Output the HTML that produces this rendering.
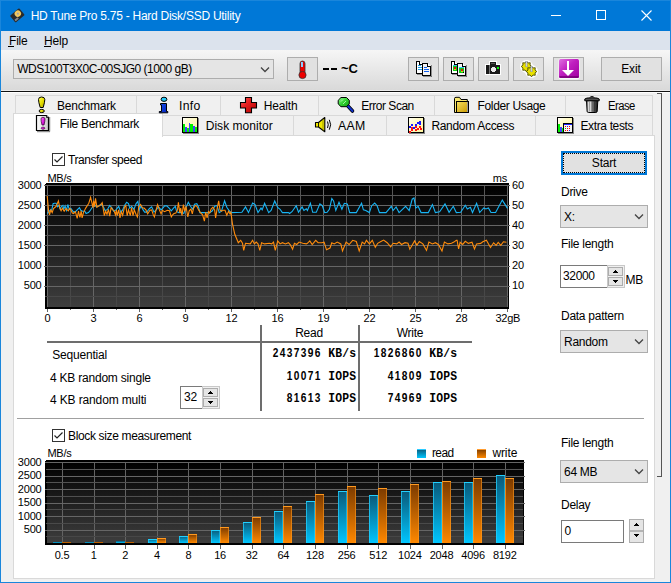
<!DOCTYPE html><html><head><meta charset="utf-8"><style>
html,body{margin:0;padding:0;width:671px;height:583px;overflow:hidden;background:#f0f0f0;}
.t{position:absolute;white-space:nowrap;}
</style></head><body>
<div style="position:absolute;left:0px;top:0px;width:671px;height:31px;background:#0078d7;"></div>
<svg style="position:absolute;left:9px;top:7px" width="16" height="16" viewBox="0 0 16 16">
<g transform="rotate(-40 8 8)"><rect x="2" y="4" width="12" height="9" rx="1" fill="#2a2a2a"/>
<circle cx="9.5" cy="7.5" r="3.2" fill="#f0c860"/><circle cx="9.5" cy="7.5" r="1" fill="#9aa0b0"/><rect x="3" y="10" width="4" height="2" fill="#888"/></g></svg>
<div class="t" style="left:30.7px;top:9.84px;font-size:12px;line-height:12px;letter-spacing:-0.259px;font-family:'Liberation Sans', sans-serif;font-weight:normal;color:#fff;">HD Tune Pro 5.75 - Hard Disk/SSD Utility</div>
<div style="position:absolute;left:551px;top:15px;width:10px;height:1px;background:#fff;"></div>
<div style="position:absolute;left:596px;top:10px;width:10px;height:10px;border:1px solid #fff;box-sizing:border-box;"></div>
<svg style="position:absolute;left:641px;top:10px" width="11" height="11" viewBox="0 0 11 11"><path d="M0.5 0.5L10.5 10.5M10.5 0.5L0.5 10.5" stroke="#fff" stroke-width="1.1"/></svg>
<div style="position:absolute;left:0px;top:0px;width:1px;height:583px;background:#1a86db;"></div>
<div style="position:absolute;left:670px;top:0px;width:1px;height:583px;background:#1a86db;"></div>
<div style="position:absolute;left:0px;top:582px;width:671px;height:1px;background:#1a86db;"></div>
<div style="position:absolute;left:0px;top:0px;width:671px;height:1px;background:#1a86db;"></div>
<div style="position:absolute;left:1px;top:31px;width:669px;height:19px;background:#dce3ed;"></div>
<div class="t" style="left:9px;top:34.84px;font-size:12px;line-height:12px;letter-spacing:-0.2px;font-family:'Liberation Sans', sans-serif;font-weight:normal;color:#000;">File</div>
<div style="position:absolute;left:8px;top:46px;width:6px;height:1px;background:#000;"></div>
<div class="t" style="left:44px;top:34.84px;font-size:12px;line-height:12px;letter-spacing:-0.2px;font-family:'Liberation Sans', sans-serif;font-weight:normal;color:#000;">Help</div>
<div style="position:absolute;left:44px;top:46px;width:7px;height:1px;background:#000;"></div>
<div style="position:absolute;left:1px;top:50px;width:669px;height:40px;background:linear-gradient(#f6f6f6,#d9d9d9);"></div>
<div style="position:absolute;left:1px;top:90px;width:669px;height:1px;background:#ebebeb;"></div>
<div style="position:absolute;left:1px;top:91px;width:669px;height:1px;background:#111;"></div>
<div style="position:absolute;left:1px;top:92px;width:669px;height:1px;background:#fff;"></div>
<div style="position:absolute;left:1px;top:93px;width:669px;height:489px;background:#f0f0f0;"></div>
<div style="position:absolute;left:13px;top:59px;width:261px;height:20px;background:#e5e5e5;border:1px solid #adadad;box-sizing:border-box;"></div>
<div class="t" style="left:17.2px;top:62.84px;font-size:12px;line-height:12px;letter-spacing:-0.511px;font-family:'Liberation Sans', sans-serif;font-weight:normal;color:#000;">WDS100T3X0C-00SJG0 (1000 gB)</div>
<svg style="position:absolute;left:260px;top:66px" width="10" height="8"><path d="M1 1.5L5 5.5L9 1.5" fill="none" stroke="#444" stroke-width="1.3"/></svg>
<div style="position:absolute;left:287px;top:57px;width:31px;height:24px;background:#e1e1e1;border:1px solid #adadad;box-sizing:border-box;"></div>
<svg style="position:absolute;left:294px;top:60px" width="16" height="20" viewBox="0 0 16 20">
<rect x="6" y="1" width="5" height="13" rx="2.5" fill="#e00" stroke="#333" stroke-width="0.8"/>
<rect x="7" y="2" width="2" height="5" fill="#8cf"/>
<circle cx="8.5" cy="15" r="3.6" fill="#e00" stroke="#333" stroke-width="0.8"/></svg>
<div style="position:absolute;left:323px;top:68px;width:6px;height:2px;background:#000;"></div>
<div style="position:absolute;left:331px;top:68px;width:6px;height:2px;background:#000;"></div>
<div class="t" style="left:341px;top:62.00px;font-size:13px;line-height:13px;letter-spacing:0px;font-family:'Liberation Sans', sans-serif;font-weight:bold;color:#000;">~C</div>
<div style="position:absolute;left:408px;top:57px;width:31px;height:24px;background:#e1e1e1;border:1px solid #adadad;box-sizing:border-box;"></div>
<div style="position:absolute;left:443px;top:57px;width:31px;height:24px;background:#e1e1e1;border:1px solid #adadad;box-sizing:border-box;"></div>
<div style="position:absolute;left:478px;top:57px;width:31px;height:24px;background:#e1e1e1;border:1px solid #adadad;box-sizing:border-box;"></div>
<div style="position:absolute;left:513px;top:57px;width:31px;height:24px;background:#e1e1e1;border:1px solid #adadad;box-sizing:border-box;"></div>
<div style="position:absolute;left:553px;top:57px;width:31px;height:24px;background:#e1e1e1;border:1px solid #adadad;box-sizing:border-box;"></div>
<svg style="position:absolute;left:0;top:0" width="671" height="583" shape-rendering="crispEdges"><path d="M416.5 61.5H419.5L422.5 64.5V73.5H416.5Z" fill="#fff" stroke="#000"/><path d="M419.5 61.5V64.5H422.5" fill="#fff" stroke="#000"/><rect x="423" y="63" width="1" height="12" fill="#555" fill-opacity="0.6"/><rect x="417" y="74" width="7" height="1" fill="#555" fill-opacity="0.6"/><rect x="418" y="65" width="3" height="1" fill="#1ea0e8"/><rect x="418" y="67" width="4" height="1" fill="#1ea0e8"/><rect x="418" y="69" width="4" height="1" fill="#1ea0e8"/><path d="M422.5 63.5H427.5L430.5 66.5V75.5H422.5Z" fill="#f4f4f4" stroke="#000"/><path d="M427.5 63.5V66.5H430.5" fill="#fff" stroke="#000"/><rect x="431" y="65" width="1" height="12" fill="#555" fill-opacity="0.6"/><rect x="423" y="76" width="9" height="1" fill="#555" fill-opacity="0.6"/><rect x="424" y="67" width="3" height="1" fill="#1060f0"/><rect x="424" y="69" width="5" height="1" fill="#1060f0"/><rect x="424" y="71" width="5" height="1" fill="#1060f0"/><path d="M451.5 61.5H454.5L457.5 64.5V73.5H451.5Z" fill="#fff" stroke="#000"/><path d="M454.5 61.5V64.5H457.5" fill="#fff" stroke="#000"/><rect x="458" y="63" width="1" height="12" fill="#555" fill-opacity="0.6"/><rect x="452" y="74" width="7" height="1" fill="#555" fill-opacity="0.6"/><rect x="453" y="65" width="4" height="1" fill="#30c0f0"/><rect x="453" y="66" width="4" height="5" fill="#10d010"/><rect x="454" y="67" width="2" height="2" fill="#e01010"/><rect x="454" y="69" width="2" height="1" fill="#d8d020"/><path d="M457.5 63.5H462.5L465.5 66.5V75.5H457.5Z" fill="#f4f4f4" stroke="#000"/><path d="M462.5 63.5V66.5H465.5" fill="#fff" stroke="#000"/><rect x="466" y="65" width="1" height="12" fill="#555" fill-opacity="0.6"/><rect x="458" y="76" width="9" height="1" fill="#555" fill-opacity="0.6"/><rect x="459" y="67" width="5" height="1" fill="#30c0f0"/><rect x="459" y="68" width="5" height="5" fill="#10d010"/><rect x="461" y="69" width="2" height="2" fill="#e01010"/><rect x="461" y="71" width="2" height="1" fill="#d8d020"/><rect x="463" y="72" width="1" height="1" fill="#000"/></svg>
<svg style="position:absolute;left:484px;top:60px" width="19" height="16" viewBox="0 0 19 16" shape-rendering="crispEdges">
<path d="M5 1h8v3h4v11H1V4h4z" fill="#fff"/>
<path d="M6 2h6v3h4v9H2V5h4z" fill="#1a1a1a"/>
<rect x="7" y="3" width="4" height="1" fill="#555"/>
<rect x="5" y="5" width="1" height="9" fill="#777"/>
<path d="M8 7h3v1h1v3h-1v1H8v-1H7V8h1z" fill="#e8e8e8"/>
<rect x="13" y="7" width="2" height="2" fill="#00ff00"/>
</svg>
<svg style="position:absolute;left:0;top:0" width="671" height="583"><circle cx="526.5" cy="66.5" r="6.5" fill="#fff"/><circle cx="531.5" cy="71.5" r="6.5" fill="#fff"/><polygon points="531.80,66.50 530.03,67.96 530.25,70.25 527.96,70.03 526.50,71.80 525.04,70.03 522.75,70.25 522.97,67.96 521.20,66.50 522.97,65.04 522.75,62.75 525.04,62.97 526.50,61.20 527.96,62.97 530.25,62.75 530.03,65.04" fill="#e8e000" stroke="#4a4a00" stroke-width="0.9"/><polygon points="536.80,71.50 535.03,72.96 535.25,75.25 532.96,75.03 531.50,76.80 530.04,75.03 527.75,75.25 527.97,72.96 526.20,71.50 527.97,70.04 527.75,67.75 530.04,67.97 531.50,66.20 532.96,67.97 535.25,67.75 535.03,70.04" fill="#e8e000" stroke="#4a4a00" stroke-width="0.9"/><rect x="525.5" y="61" width="2" height="6" fill="#8890a8"/><rect x="526" y="61.5" width="0.8" height="5" fill="#fff" fill-opacity="0.7"/><rect x="530.5" y="66" width="2" height="6" fill="#8890a8"/><rect x="531" y="66.5" width="0.8" height="5" fill="#fff" fill-opacity="0.7"/></svg>
<svg style="position:absolute;left:558px;top:58px" width="22" height="22" viewBox="0 0 22 22">
<defs><linearGradient id="pg" x1="0" y1="0" x2="1" y2="1"><stop offset="0" stop-color="#e070e0"/><stop offset="0.45" stop-color="#c020c0"/><stop offset="1" stop-color="#a000a0"/></linearGradient></defs>
<rect x="0.5" y="0.5" width="21" height="21" rx="2" fill="#fff" fill-opacity="0.8"/>
<rect x="1" y="1" width="20" height="19" rx="1.5" fill="url(#pg)"/>
<rect x="1.5" y="18" width="19" height="2" fill="#700070" fill-opacity="0.7"/>
<rect x="9" y="3" width="2" height="11" fill="#fff"/>
<path d="M4 12h12l-6 6z" fill="#fff"/>
</svg>
<div style="position:absolute;left:601px;top:57px;width:61px;height:24px;background:#e1e1e1;border:1px solid #adadad;box-sizing:border-box;"></div>
<div class="t" style="left:531px;width:200px;text-align:center;top:62.84px;font-size:12px;line-height:12px;letter-spacing:-0.1px;font-family:'Liberation Sans', sans-serif;font-weight:normal;color:#000;">Exit</div>
<div style="position:absolute;left:15px;top:95px;width:122px;height:21px;background:#f0f0f0;border:1px solid #d9d9d9;box-sizing:border-box;"></div>
<div style="position:absolute;left:136px;top:95px;width:85px;height:21px;background:#f0f0f0;border:1px solid #d9d9d9;box-sizing:border-box;"></div>
<div style="position:absolute;left:220px;top:95px;width:99px;height:21px;background:#f0f0f0;border:1px solid #d9d9d9;box-sizing:border-box;"></div>
<div style="position:absolute;left:318px;top:95px;width:117px;height:21px;background:#f0f0f0;border:1px solid #d9d9d9;box-sizing:border-box;"></div>
<div style="position:absolute;left:434px;top:95px;width:132px;height:21px;background:#f0f0f0;border:1px solid #d9d9d9;box-sizing:border-box;"></div>
<div style="position:absolute;left:565px;top:95px;width:88px;height:21px;background:#f0f0f0;border:1px solid #d9d9d9;box-sizing:border-box;"></div>
<div style="position:absolute;left:162px;top:115px;width:132px;height:21px;background:#f0f0f0;border:1px solid #d9d9d9;box-sizing:border-box;"></div>
<div style="position:absolute;left:293px;top:115px;width:94px;height:21px;background:#f0f0f0;border:1px solid #d9d9d9;box-sizing:border-box;"></div>
<div style="position:absolute;left:386px;top:115px;width:150px;height:21px;background:#f0f0f0;border:1px solid #d9d9d9;box-sizing:border-box;"></div>
<div style="position:absolute;left:535px;top:115px;width:118px;height:21px;background:#f0f0f0;border:1px solid #d9d9d9;box-sizing:border-box;"></div>
<div style="position:absolute;left:13px;top:135px;width:642px;height:444px;background:#fff;border:1px solid #d9d9d9;box-sizing:border-box;"></div>
<div style="position:absolute;left:13px;top:113px;width:150px;height:24px;background:#fff;border:1px solid #d9d9d9;border-bottom:none;box-sizing:border-box;"></div>
<div style="position:absolute;left:657px;top:93px;width:5px;height:384px;border:1px solid #555;border-left:none;box-sizing:border-box;"></div>
<div class="t" style="left:56.900000000000006px;top:99.84px;font-size:12px;line-height:12px;letter-spacing:-0.2px;font-family:'Liberation Sans', sans-serif;font-weight:normal;color:#000;">Benchmark</div>
<div class="t" style="left:179.39999999999998px;top:99.84px;font-size:12px;line-height:12px;letter-spacing:0.3px;font-family:'Liberation Sans', sans-serif;font-weight:normal;color:#000;transform:scaleX(1.019);transform-origin:0 0;">Info</div>
<div class="t" style="left:263.7px;top:99.84px;font-size:12px;line-height:12px;letter-spacing:-0.14px;font-family:'Liberation Sans', sans-serif;font-weight:normal;color:#000;">Health</div>
<div class="t" style="left:361.3px;top:99.84px;font-size:12px;line-height:12px;letter-spacing:-0.489px;font-family:'Liberation Sans', sans-serif;font-weight:normal;color:#000;">Error Scan</div>
<div class="t" style="left:477.5px;top:99.84px;font-size:12px;line-height:12px;letter-spacing:-0.345px;font-family:'Liberation Sans', sans-serif;font-weight:normal;color:#000;">Folder Usage</div>
<div class="t" style="left:608.3000000000001px;top:99.84px;font-size:12px;line-height:12px;letter-spacing:-0.6px;font-family:'Liberation Sans', sans-serif;font-weight:normal;color:#000;transform:scaleX(0.941);transform-origin:0 0;">Erase</div>
<div class="t" style="left:59.800000000000004px;top:117.84px;font-size:12px;line-height:12px;letter-spacing:-0.292px;font-family:'Liberation Sans', sans-serif;font-weight:normal;color:#000;">File Benchmark</div>
<div class="t" style="left:205.7px;top:119.84px;font-size:12px;line-height:12px;letter-spacing:0.036px;font-family:'Liberation Sans', sans-serif;font-weight:normal;color:#000;">Disk monitor</div>
<div class="t" style="left:337.7px;top:119.84px;font-size:12px;line-height:12px;letter-spacing:0.3px;font-family:'Liberation Sans', sans-serif;font-weight:normal;color:#000;transform:scaleX(1.023);transform-origin:0 0;">AAM</div>
<div class="t" style="left:431.4px;top:119.84px;font-size:12px;line-height:12px;letter-spacing:-0.308px;font-family:'Liberation Sans', sans-serif;font-weight:normal;color:#000;">Random Access</div>
<div class="t" style="left:580.4000000000001px;top:119.84px;font-size:12px;line-height:12px;letter-spacing:-0.35px;font-family:'Liberation Sans', sans-serif;font-weight:normal;color:#000;">Extra tests</div>
<svg style="position:absolute;left:0;top:0" width="671" height="583"><defs><linearGradient id="yel" x1="0" y1="0" x2="1" y2="1"><stop offset="0" stop-color="#ffff60"/><stop offset="0.5" stop-color="#e8e000"/><stop offset="1" stop-color="#a8a000"/></linearGradient><linearGradient id="mag" x1="0" y1="0" x2="1" y2="1"><stop offset="0" stop-color="#ff80ff"/><stop offset="0.5" stop-color="#e020e0"/><stop offset="1" stop-color="#a000a0"/></linearGradient><linearGradient id="pg2" x1="0" y1="0" x2="1" y2="0"><stop offset="0" stop-color="#ffffff"/><stop offset="1" stop-color="#c8c8c8"/></linearGradient><linearGradient id="blu" x1="0" y1="0" x2="1" y2="1"><stop offset="0" stop-color="#1850e8"/><stop offset="1" stop-color="#0020c0"/></linearGradient><linearGradient id="red" x1="0" y1="0" x2="1" y2="1"><stop offset="0" stop-color="#ff6060"/><stop offset="0.4" stop-color="#e82020"/><stop offset="1" stop-color="#b00000"/></linearGradient><linearGradient id="grn" x1="0" y1="0" x2="1" y2="1"><stop offset="0" stop-color="#90ff90"/><stop offset="0.5" stop-color="#30d030"/><stop offset="1" stop-color="#10a010"/></linearGradient><linearGradient id="fold" x1="0" y1="0" x2="1" y2="1"><stop offset="0" stop-color="#f8e060"/><stop offset="1" stop-color="#c89800"/></linearGradient><linearGradient id="trash" x1="0" y1="0" x2="1" y2="0"><stop offset="0" stop-color="#404040"/><stop offset="0.3" stop-color="#f0f0f0"/><stop offset="0.55" stop-color="#707070"/><stop offset="1" stop-color="#101010"/></linearGradient><linearGradient id="cream" x1="0" y1="0" x2="1" y2="1"><stop offset="0" stop-color="#ffffff"/><stop offset="0.3" stop-color="#fffbd0"/><stop offset="1" stop-color="#fff49a"/></linearGradient></defs><path d="M38.5 99.5Q38.5 97 41.5 97Q44.8 97 44.8 99.5Q44.8 102 43.2 107.5H40.2Q38.5 102 38.5 99.5Z" fill="url(#yel)" stroke="#000" stroke-width="1"/><ellipse cx="41.7" cy="111" rx="2.6" ry="1.6" fill="url(#yel)" stroke="#000" stroke-width="1"/><path d="M36.5 115.5H46.5L48.5 117.5V130.5H36.5Z" fill="url(#pg2)" stroke="#000" stroke-width="1.2"/><path d="M46.5 115.5V117.5H48.5" fill="#fff" stroke="#000" stroke-width="0.8"/><rect x="49.2" y="117" width="1" height="14.5" fill="#777"/><rect x="37" y="131.2" width="13" height="1" fill="#777"/><path d="M41 119Q41 117.3 43 117.3Q45 117.3 45 119Q45 121 44 125H42Q41 121 41 119Z" fill="url(#mag)" stroke="#300030" stroke-width="0.7"/><ellipse cx="43" cy="128.2" rx="1.8" ry="1.1" fill="url(#mag)" stroke="#300030" stroke-width="0.6"/><ellipse cx="164" cy="99.3" rx="2.9" ry="2.1" fill="#20c8f8" stroke="#000" stroke-width="1"/><path d="M160.5 103.5H166.5V111.5H167.8V112.8H159.3V111.5H161.5V105H160.5Z" fill="url(#blu)" stroke="#000" stroke-width="1"/><path d="M245.5 97.5H251.5V102.5H256.5V108H251.5V112.8H245.5V108H240.5V102.5H245.5Z" fill="url(#red)" stroke="#000" stroke-width="1.1"/><path d="M347 105L352.5 111" stroke="#000" stroke-width="3.6" stroke-linecap="round"/><path d="M347 105L352.5 111" stroke="#1030c8" stroke-width="2" stroke-linecap="round"/><path d="M341 97.5H346.5L349.3 100.3V103.9L346.5 106.7H341L338.2 103.9V100.3Z" fill="url(#grn)" stroke="#000" stroke-width="1"/><path d="M341 101.5L343 99.5M343 104L346 101" stroke="#d0ffd0" stroke-width="0.7"/><path d="M454.5 98.5Q454.5 97.3 456 97.3H459.5L461 99.5H467.3V101.5H456.5V112.5H454.5Z" fill="#f8e870" stroke="#000" stroke-width="1"/><rect x="456.5" y="101.5" width="12" height="11" fill="url(#fold)" stroke="#000" stroke-width="1"/><rect x="467" y="102" width="1" height="10" fill="#999"/><path d="M586.5 100.5H597.8L597.2 111.3Q597 112.5 595.8 112.5H588.5Q587.3 112.5 587.1 111.3Z" fill="url(#trash)" stroke="#000" stroke-width="1"/><path d="M589.5 101.5V111.5M592 101.5V111.5M594.5 101.5V111.5" stroke="#000" stroke-opacity="0.35" stroke-width="0.8"/><path d="M588.3 101.5V111.5" stroke="#fff" stroke-opacity="0.8" stroke-width="0.9"/><path d="M590 97.5Q590 96.6 592 96.6Q594 96.6 594 97.5" fill="none" stroke="#000" stroke-width="1"/><path d="M584.8 99Q585.5 97.8 592 97.8Q598.5 97.8 599.2 99V100.8H584.8Z" fill="#505050" stroke="#000" stroke-width="1"/><rect x="183" y="133" width="16" height="1" fill="#888"/><rect x="198" y="118" width="1" height="16" fill="#888"/><rect x="182.5" y="117.5" width="15" height="15" fill="url(#cream)" stroke="#000" stroke-width="1"/><rect x="183" y="124" width="2" height="8" fill="#00f000" shape-rendering="crispEdges"/><rect x="185" y="127" width="2" height="5" fill="#4040ff" shape-rendering="crispEdges"/><rect x="187" y="128" width="2" height="4" fill="#00f000" shape-rendering="crispEdges"/><rect x="189" y="123" width="1" height="9" fill="#4040ff" shape-rendering="crispEdges"/><rect x="190" y="124" width="3" height="8" fill="#00f000" shape-rendering="crispEdges"/><rect x="193" y="126" width="2" height="6" fill="#4040ff" shape-rendering="crispEdges"/><rect x="195" y="127" width="2" height="5" fill="#00f000" shape-rendering="crispEdges"/><path d="M315.5 122.5H318.5L324.8 117.5V131.8L318.5 127H315.5Z" fill="#f0e800" stroke="#000" stroke-width="1.1" stroke-linejoin="round"/><path d="M318.5 122.5V127" stroke="#000" stroke-width="0.9"/><path d="M323 118.5V131" stroke="#6a6a00" stroke-width="0.6"/><path d="M327.5 121.5Q329 124.7 327.5 128" fill="none" stroke="#000" stroke-width="1"/><path d="M329.3 119.8Q332 124.7 329.3 129.7" fill="none" stroke="#000" stroke-width="1"/><rect x="409" y="133" width="16" height="1" fill="#888"/><rect x="424" y="118" width="1" height="16" fill="#888"/><rect x="408.5" y="117.5" width="15" height="15" fill="url(#cream)" stroke="#000" stroke-width="1"/><rect x="411" y="124" width="2" height="2" fill="#1818ff" shape-rendering="crispEdges"/><rect x="409" y="126" width="2" height="2" fill="#1818ff" shape-rendering="crispEdges"/><rect x="413" y="127" width="2" height="2" fill="#1818ff" shape-rendering="crispEdges"/><rect x="415" y="124" width="2" height="2" fill="#1818ff" shape-rendering="crispEdges"/><rect x="417" y="122" width="2" height="2" fill="#1818ff" shape-rendering="crispEdges"/><rect x="419" y="121" width="2" height="2" fill="#1818ff" shape-rendering="crispEdges"/><rect x="419" y="123" width="2" height="2" fill="#1818ff" shape-rendering="crispEdges"/><rect x="411" y="127" width="2" height="2" fill="#ff1010" shape-rendering="crispEdges"/><rect x="411" y="129" width="2" height="2" fill="#ff1010" shape-rendering="crispEdges"/><rect x="415" y="126" width="2" height="2" fill="#ff1010" shape-rendering="crispEdges"/><rect x="415" y="129" width="2" height="2" fill="#ff1010" shape-rendering="crispEdges"/><rect x="417" y="128" width="2" height="2" fill="#ff1010" shape-rendering="crispEdges"/><rect x="419" y="126" width="2" height="2" fill="#ff1010" shape-rendering="crispEdges"/><rect x="420" y="128" width="2" height="2" fill="#ff1010" shape-rendering="crispEdges"/><rect x="409" y="131" width="2" height="2" fill="#ff1010" shape-rendering="crispEdges"/><rect x="558" y="133" width="16" height="1" fill="#888"/><rect x="573" y="118" width="1" height="16" fill="#888"/><rect x="557.5" y="117.5" width="15" height="15" fill="url(#cream)" stroke="#000" stroke-width="1"/><rect x="558" y="124" width="2" height="8" fill="#00f000" shape-rendering="crispEdges"/><rect x="560" y="127" width="2" height="5" fill="#4040ff" shape-rendering="crispEdges"/><rect x="562" y="128" width="1" height="4" fill="#00f000" shape-rendering="crispEdges"/><rect x="563" y="123" width="10" height="10" fill="#000" shape-rendering="crispEdges"/><rect x="564" y="124" width="8" height="8" fill="#f4f4f4" shape-rendering="crispEdges"/><rect x="564" y="124" width="8" height="1" fill="#2020ff" shape-rendering="crispEdges"/><rect x="565" y="126" width="1" height="1" fill="#f00" shape-rendering="crispEdges"/><rect x="567" y="126" width="1" height="1" fill="#22f" shape-rendering="crispEdges"/><rect x="569" y="126" width="1" height="1" fill="#f00" shape-rendering="crispEdges"/><rect x="565" y="128" width="1" height="1" fill="#0c0" shape-rendering="crispEdges"/><rect x="567" y="128" width="1" height="1" fill="#f00" shape-rendering="crispEdges"/><rect x="569" y="128" width="1" height="1" fill="#f00" shape-rendering="crispEdges"/><rect x="565" y="130" width="1" height="1" fill="#f00" shape-rendering="crispEdges"/><rect x="567" y="130" width="1" height="1" fill="#f00" shape-rendering="crispEdges"/><rect x="569" y="130" width="1" height="1" fill="#22f" shape-rendering="crispEdges"/></svg>
<div style="position:absolute;left:52px;top:153px;width:13px;height:13px;background:#fff;border:1px solid #333;box-sizing:border-box;"></div>
<svg style="position:absolute;left:52px;top:153px" width="13" height="13"><path d="M2.5 6.5L5 9L10.5 3.5" fill="none" stroke="#222" stroke-width="1.2"/></svg>
<div class="t" style="left:68px;top:153.84px;font-size:12px;line-height:12px;letter-spacing:-0.45px;font-family:'Liberation Sans', sans-serif;font-weight:normal;color:#000;">Transfer speed</div>
<div style="position:absolute;left:52px;top:429px;width:13px;height:13px;background:#fff;border:1px solid #333;box-sizing:border-box;"></div>
<svg style="position:absolute;left:52px;top:429px" width="13" height="13"><path d="M2.5 6.5L5 9L10.5 3.5" fill="none" stroke="#222" stroke-width="1.2"/></svg>
<div class="t" style="left:68px;top:429.84px;font-size:12px;line-height:12px;letter-spacing:-0.35px;font-family:'Liberation Sans', sans-serif;font-weight:normal;color:#000;">Block size measurement</div>
<svg style="position:absolute;left:0;top:0" width="671" height="583" viewBox="0 0 671 583" shape-rendering="crispEdges">
<defs><linearGradient id="c1g" x1="0" y1="0" x2="0" y2="1"><stop offset="0" stop-color="#000"/><stop offset="1" stop-color="#3e3e3e"/></linearGradient></defs>
<rect x="45" y="184" width="464" height="125" fill="#000"/><rect x="46" y="183" width="463" height="1" fill="#000"/>
<rect x="47" y="185" width="461" height="122" fill="url(#c1g)"/>
<defs><linearGradient id="mn" gradientUnits="userSpaceOnUse" x1="0" y1="185" x2="0" y2="307"><stop offset="0" stop-color="#585858"/><stop offset="1" stop-color="#464646"/></linearGradient></defs>
<rect x="47.0" y="185" width="1" height="122" fill="#666666"/>
<line x1="47.5" y1="309" x2="47.5" y2="312" stroke="#666666"/>
<rect x="70.0" y="185" width="1" height="122" fill="url(#mn)"/>
<line x1="70.5" y1="309" x2="70.5" y2="310" stroke="#666666"/>
<rect x="93.0" y="185" width="1" height="122" fill="#666666"/>
<line x1="93.5" y1="309" x2="93.5" y2="312" stroke="#666666"/>
<rect x="116.0" y="185" width="1" height="122" fill="url(#mn)"/>
<line x1="116.5" y1="309" x2="116.5" y2="310" stroke="#666666"/>
<rect x="139.0" y="185" width="1" height="122" fill="#666666"/>
<line x1="139.5" y1="309" x2="139.5" y2="312" stroke="#666666"/>
<rect x="162.0" y="185" width="1" height="122" fill="url(#mn)"/>
<line x1="162.5" y1="309" x2="162.5" y2="310" stroke="#666666"/>
<rect x="185.0" y="185" width="1" height="122" fill="#666666"/>
<line x1="185.5" y1="309" x2="185.5" y2="312" stroke="#666666"/>
<rect x="208.0" y="185" width="1" height="122" fill="url(#mn)"/>
<line x1="208.5" y1="309" x2="208.5" y2="310" stroke="#666666"/>
<rect x="231.0" y="185" width="1" height="122" fill="#666666"/>
<line x1="231.5" y1="309" x2="231.5" y2="312" stroke="#666666"/>
<rect x="254.0" y="185" width="1" height="122" fill="url(#mn)"/>
<line x1="254.5" y1="309" x2="254.5" y2="310" stroke="#666666"/>
<rect x="277.0" y="185" width="1" height="122" fill="#666666"/>
<line x1="277.5" y1="309" x2="277.5" y2="312" stroke="#666666"/>
<rect x="300.0" y="185" width="1" height="122" fill="url(#mn)"/>
<line x1="300.5" y1="309" x2="300.5" y2="310" stroke="#666666"/>
<rect x="323.0" y="185" width="1" height="122" fill="#666666"/>
<line x1="323.5" y1="309" x2="323.5" y2="312" stroke="#666666"/>
<rect x="346.0" y="185" width="1" height="122" fill="url(#mn)"/>
<line x1="346.5" y1="309" x2="346.5" y2="310" stroke="#666666"/>
<rect x="369.0" y="185" width="1" height="122" fill="#666666"/>
<line x1="369.5" y1="309" x2="369.5" y2="312" stroke="#666666"/>
<rect x="392.0" y="185" width="1" height="122" fill="url(#mn)"/>
<line x1="392.5" y1="309" x2="392.5" y2="310" stroke="#666666"/>
<rect x="415.0" y="185" width="1" height="122" fill="#666666"/>
<line x1="415.5" y1="309" x2="415.5" y2="312" stroke="#666666"/>
<rect x="438.0" y="185" width="1" height="122" fill="url(#mn)"/>
<line x1="438.5" y1="309" x2="438.5" y2="310" stroke="#666666"/>
<rect x="461.0" y="185" width="1" height="122" fill="#666666"/>
<line x1="461.5" y1="309" x2="461.5" y2="312" stroke="#666666"/>
<rect x="484.0" y="185" width="1" height="122" fill="url(#mn)"/>
<line x1="484.5" y1="309" x2="484.5" y2="310" stroke="#666666"/>
<rect x="507.0" y="185" width="1" height="122" fill="#666666"/>
<line x1="507.5" y1="309" x2="507.5" y2="312" stroke="#666666"/>
<line x1="44" y1="185.5" x2="510" y2="185.5" stroke="#666666"/>
<line x1="45" y1="195.5" x2="508" y2="195.5" stroke="#565656"/>
<line x1="44" y1="205.5" x2="510" y2="205.5" stroke="#666666"/>
<line x1="45" y1="215.5" x2="508" y2="215.5" stroke="#535353"/>
<line x1="44" y1="225.5" x2="510" y2="225.5" stroke="#666666"/>
<line x1="45" y1="235.5" x2="508" y2="235.5" stroke="#505050"/>
<line x1="44" y1="245.5" x2="510" y2="245.5" stroke="#666666"/>
<line x1="45" y1="256.5" x2="508" y2="256.5" stroke="#4d4d4d"/>
<line x1="44" y1="266.5" x2="510" y2="266.5" stroke="#666666"/>
<line x1="45" y1="276.5" x2="508" y2="276.5" stroke="#4a4a4a"/>
<line x1="44" y1="286.5" x2="510" y2="286.5" stroke="#666666"/>
<line x1="45" y1="296.5" x2="508" y2="296.5" stroke="#474747"/>
<polyline points="47.2,213.5 49.0,211.7 50.4,209.9 51.7,210.3 53.1,203.6 54.4,203.2 56.2,203.2 57.5,206.8 58.9,205.4 60.2,209.0 61.5,206.3 62.9,205.4 63.8,209.4 65.1,205.9 66.5,210.3 67.8,204.5 69.2,209.4 70.9,208.5 73.6,212.1 75.9,211.2 79.4,207.7 80.8,210.3 82.6,211.2 84.8,211.2 86.1,213.5 88.4,212.6 89.7,211.2 92.0,207.7 93.3,205.4 95.1,205.4 96.4,206.8 98.7,206.3 100.5,204.5 101.8,205.0 103.6,207.2 105.2,210.8 107.5,209.4 109.7,205.4 111.9,207.7 113.7,211.2 116.0,209.9 118.7,206.3 120.9,212.6 122.7,209.9 124.5,205.4 126.7,202.3 128.5,203.6 129.8,208.1 131.6,206.3 133.9,209.4 136.1,203.6 137.9,201.4 139.2,209.9 141.0,205.9 142.8,209.4 144.6,212.1 146.8,212.1 149.5,208.5 151.7,206.8 154.0,212.1 156.2,209.9 158.5,206.8 161.1,209.9 162.8,208.1 164.6,205.9 166.8,205.9 169.1,208.1 171.3,210.8 173.5,208.1 175.3,206.3 176.7,211.7 178.9,212.6 182.0,212.6 183.8,213.5 185.6,208.5 188.3,202.3 190.5,206.3 192.8,209.4 194.5,204.1 196.8,203.6 198.6,207.2 199.9,212.6 203.0,212.6 206.6,212.6 209.7,212.6 212.4,210.8 214.7,206.3 216.9,205.4 218.7,210.8 219.2,212.6 221.5,211.2 224.6,200.9 226.8,207.2 228.6,209.9 230.9,212.6 241.9,212.3 245.5,206.9 248.5,212.6 252.6,203.1 255.0,204.5 258.0,212.6 261.0,208.1 262.2,209.9 264.6,203.3 268.7,212.6 271.1,210.5 274.7,201.0 277.7,207.5 280.1,209.3 282.4,212.6 288.4,212.6 289.6,213.5 292.0,211.7 296.2,205.7 298.5,212.3 302.1,206.9 303.9,210.5 306.3,208.7 307.4,210.5 310.4,203.3 312.7,212.3 316.3,212.3 319.9,203.9 322.3,205.7 324.7,212.6 327.1,212.3 329.4,209.3 331.8,198.6 333.6,201.0 335.8,210.5 339.0,202.2 341.9,209.3 344.3,203.3 347.3,203.9 349.7,212.6 356.3,212.6 361.6,203.3 363.4,209.9 365.8,210.5 369.4,212.6 371.7,205.7 374.7,203.1 377.1,205.7 379.5,212.6 380.0,212.6 386.0,212.6 391.3,206.3 393.1,210.5 396.1,206.9 399.1,212.6 405.6,206.3 409.2,210.5 412.2,199.2 414.0,198.0 415.8,208.1 418.1,206.3 421.1,212.6 428.3,212.6 432.4,204.5 435.4,212.6 439.6,211.7 445.0,203.9 449.1,212.3 453.3,206.3 456.3,212.6 460.7,212.3 465.3,205.3 467.3,208.9 470.4,207.3 472.5,212.5 476.6,203.2 479.7,212.5 483.8,207.9 485.9,208.9 488.4,207.9 491.0,212.5 495.6,212.5 502.3,200.1 507.5,208.4" fill="none" stroke="#18b4f4" stroke-width="1.1" shape-rendering="auto"/>
<polyline points="47.2,196.0 48.6,210.8 49.5,214.8 50.8,209.9 52.2,212.6 53.5,208.5 56.2,206.3 58.4,200.9 59.8,208.1 61.1,210.8 62.4,208.1 64.2,211.2 66.0,208.5 68.3,210.8 69.6,208.5 70.9,209.9 72.3,213.0 73.6,213.5 75.4,211.7 77.2,218.4 78.5,211.2 79.9,217.5 81.2,210.8 82.1,217.9 83.5,212.6 85.7,208.1 88.8,203.2 90.6,197.4 92.0,203.2 92.9,207.7 93.7,200.9 94.6,206.8 95.5,198.3 96.9,207.2 98.7,205.9 100.5,205.0 102.2,202.7 103.6,210.8 104.3,215.7 105.7,211.2 107.0,214.4 108.4,209.4 109.7,216.2 111.1,207.7 112.4,209.4 114.2,211.2 115.5,214.8 116.4,209.9 117.3,215.7 118.7,209.9 120.0,217.9 121.3,211.7 122.7,215.3 124.5,207.2 125.8,205.4 127.2,215.7 128.5,209.9 130.3,215.7 131.6,207.7 133.0,215.7 134.3,209.9 136.1,214.4 137.4,217.0 138.8,206.8 140.6,204.5 142.4,207.7 144.1,208.1 145.9,209.9 147.7,213.9 150.0,210.3 151.7,209.9 153.1,214.4 154.4,217.0 155.8,210.8 157.6,204.5 159.4,209.9 161.1,213.9 162.3,210.3 164.6,211.7 167.3,210.3 169.5,210.8 171.3,217.0 172.6,214.8 174.0,213.5 175.8,213.0 177.5,209.9 178.4,202.3 179.8,213.0 180.7,208.1 182.0,215.7 183.4,204.5 184.7,211.2 186.0,206.3 187.8,217.0 189.2,210.8 191.0,209.0 192.3,213.9 193.6,208.1 195.4,205.4 196.8,206.3 198.6,209.9 200.4,212.6 202.6,214.8 204.4,221.1 205.7,212.1 207.1,217.9 208.4,211.7 209.7,213.0 211.1,209.0 212.9,207.2 214.7,210.3 215.6,217.9 217.4,207.2 218.7,200.9 220.0,209.9 221.5,211.2 223.3,210.3 225.0,210.3 226.8,215.3 228.6,211.2 230.0,213.9 230.9,212.1 232.4,223.6 234.8,234.3 238.3,242.7 240.7,240.3 242.5,243.3 243.7,250.4 245.5,243.3 250.3,243.9 252.6,240.3 254.4,243.9 256.2,242.1 258.0,243.9 259.8,250.4 261.6,242.7 264.6,243.9 269.3,243.3 271.7,243.9 273.5,242.1 275.3,250.4 277.7,240.9 280.1,243.9 282.4,242.7 285.4,243.9 288.4,242.7 290.2,244.5 292.6,249.2 294.4,243.3 296.7,244.5 299.1,242.1 302.7,243.3 306.3,243.9 307.4,243.3 309.8,240.9 312.2,244.5 315.7,240.3 318.1,242.7 321.7,242.7 324.1,242.1 326.5,249.8 330.0,248.0 331.8,242.7 334.2,243.9 337.2,242.1 340.8,243.9 342.5,251.0 346.1,242.1 349.1,244.5 352.7,240.3 356.3,241.5 359.2,251.0 362.2,242.1 364.6,243.9 366.4,240.3 369.4,243.9 372.3,240.3 375.3,247.4 377.7,243.3 380.0,242.1 383.6,240.1 387.2,242.7 390.7,246.8 393.1,243.3 396.7,243.9 399.1,242.1 401.5,244.5 405.0,242.7 408.0,243.3 409.8,249.2 414.6,240.9 416.9,245.1 419.3,241.5 422.9,243.9 426.5,250.4 428.9,242.1 432.4,243.9 435.4,242.7 438.4,244.5 442.0,251.0 444.4,242.1 447.9,243.9 451.5,243.3 453.9,242.1 456.3,240.3 457.1,240.3 458.6,249.0 460.1,242.3 462.7,244.4 465.3,241.3 468.4,243.4 472.0,242.3 474.5,249.0 476.6,243.9 480.7,243.4 482.8,241.8 486.4,240.3 490.5,247.5 493.6,242.8 496.2,245.4 498.2,242.3 500.8,245.4 503.4,241.8 506.4,242.3" fill="none" stroke="#ff8c0c" stroke-width="1.1" shape-rendering="auto"/>
</svg>
<div class="t" style="right:629.5px;top:179.69px;font-size:11px;line-height:11px;letter-spacing:-0.2px;font-family:'Liberation Sans', sans-serif;font-weight:normal;color:#000;">3000</div>
<div class="t" style="right:629.5px;top:199.85px;font-size:11px;line-height:11px;letter-spacing:-0.2px;font-family:'Liberation Sans', sans-serif;font-weight:normal;color:#000;">2500</div>
<div class="t" style="right:629.5px;top:220.01px;font-size:11px;line-height:11px;letter-spacing:-0.2px;font-family:'Liberation Sans', sans-serif;font-weight:normal;color:#000;">2000</div>
<div class="t" style="right:629.5px;top:240.17px;font-size:11px;line-height:11px;letter-spacing:-0.2px;font-family:'Liberation Sans', sans-serif;font-weight:normal;color:#000;">1500</div>
<div class="t" style="right:629.5px;top:260.33px;font-size:11px;line-height:11px;letter-spacing:-0.2px;font-family:'Liberation Sans', sans-serif;font-weight:normal;color:#000;">1000</div>
<div class="t" style="right:629.5px;top:280.49px;font-size:11px;line-height:11px;letter-spacing:-0.2px;font-family:'Liberation Sans', sans-serif;font-weight:normal;color:#000;">500</div>
<div class="t" style="left:512px;top:179.69px;font-size:11px;line-height:11px;letter-spacing:-0.2px;font-family:'Liberation Sans', sans-serif;font-weight:normal;color:#000;">60</div>
<div class="t" style="left:512px;top:199.85px;font-size:11px;line-height:11px;letter-spacing:-0.2px;font-family:'Liberation Sans', sans-serif;font-weight:normal;color:#000;">50</div>
<div class="t" style="left:512px;top:220.01px;font-size:11px;line-height:11px;letter-spacing:-0.2px;font-family:'Liberation Sans', sans-serif;font-weight:normal;color:#000;">40</div>
<div class="t" style="left:512px;top:240.17px;font-size:11px;line-height:11px;letter-spacing:-0.2px;font-family:'Liberation Sans', sans-serif;font-weight:normal;color:#000;">30</div>
<div class="t" style="left:512px;top:260.33px;font-size:11px;line-height:11px;letter-spacing:-0.2px;font-family:'Liberation Sans', sans-serif;font-weight:normal;color:#000;">20</div>
<div class="t" style="left:512px;top:280.49px;font-size:11px;line-height:11px;letter-spacing:-0.2px;font-family:'Liberation Sans', sans-serif;font-weight:normal;color:#000;">10</div>
<div class="t" style="left:-52.5px;width:200px;text-align:center;top:312.69px;font-size:11px;line-height:11px;letter-spacing:-0.2px;font-family:'Liberation Sans', sans-serif;font-weight:normal;color:#000;">0</div>
<div class="t" style="left:-6.5px;width:200px;text-align:center;top:312.69px;font-size:11px;line-height:11px;letter-spacing:-0.2px;font-family:'Liberation Sans', sans-serif;font-weight:normal;color:#000;">3</div>
<div class="t" style="left:39.5px;width:200px;text-align:center;top:312.69px;font-size:11px;line-height:11px;letter-spacing:-0.2px;font-family:'Liberation Sans', sans-serif;font-weight:normal;color:#000;">6</div>
<div class="t" style="left:85.5px;width:200px;text-align:center;top:312.69px;font-size:11px;line-height:11px;letter-spacing:-0.2px;font-family:'Liberation Sans', sans-serif;font-weight:normal;color:#000;">9</div>
<div class="t" style="left:131.5px;width:200px;text-align:center;top:312.69px;font-size:11px;line-height:11px;letter-spacing:-0.2px;font-family:'Liberation Sans', sans-serif;font-weight:normal;color:#000;">12</div>
<div class="t" style="left:177.5px;width:200px;text-align:center;top:312.69px;font-size:11px;line-height:11px;letter-spacing:-0.2px;font-family:'Liberation Sans', sans-serif;font-weight:normal;color:#000;">16</div>
<div class="t" style="left:223.5px;width:200px;text-align:center;top:312.69px;font-size:11px;line-height:11px;letter-spacing:-0.2px;font-family:'Liberation Sans', sans-serif;font-weight:normal;color:#000;">19</div>
<div class="t" style="left:269.5px;width:200px;text-align:center;top:312.69px;font-size:11px;line-height:11px;letter-spacing:-0.2px;font-family:'Liberation Sans', sans-serif;font-weight:normal;color:#000;">22</div>
<div class="t" style="left:315.5px;width:200px;text-align:center;top:312.69px;font-size:11px;line-height:11px;letter-spacing:-0.2px;font-family:'Liberation Sans', sans-serif;font-weight:normal;color:#000;">25</div>
<div class="t" style="left:361.5px;width:200px;text-align:center;top:312.69px;font-size:11px;line-height:11px;letter-spacing:-0.2px;font-family:'Liberation Sans', sans-serif;font-weight:normal;color:#000;">28</div>
<div class="t" style="right:151px;top:312.69px;font-size:11px;line-height:11px;letter-spacing:-0.3px;font-family:'Liberation Sans', sans-serif;font-weight:normal;color:#000;">32gB</div>
<div class="t" style="left:47.5px;top:172.69px;font-size:11px;line-height:11px;letter-spacing:-0.3px;font-family:'Liberation Sans', sans-serif;font-weight:normal;color:#000;">MB/s</div>
<div class="t" style="right:164px;top:172.69px;font-size:11px;line-height:11px;letter-spacing:-0.2px;font-family:'Liberation Sans', sans-serif;font-weight:normal;color:#000;">ms</div>
<div style="position:absolute;left:47px;top:341px;width:425px;height:2px;background:#6d6d6d;"></div>
<div style="position:absolute;left:260px;top:325px;width:2px;height:86px;background:#6d6d6d;"></div>
<div style="position:absolute;left:358px;top:325px;width:2px;height:86px;background:#6d6d6d;"></div>
<div class="t" style="left:209px;width:200px;text-align:center;top:326.84px;font-size:12px;line-height:12px;letter-spacing:-0.27px;font-family:'Liberation Sans', sans-serif;font-weight:normal;color:#000;">Read</div>
<div class="t" style="left:310px;width:200px;text-align:center;top:326.84px;font-size:12px;line-height:12px;letter-spacing:-0.27px;font-family:'Liberation Sans', sans-serif;font-weight:normal;color:#000;">Write</div>
<div class="t" style="left:52.2px;top:348.84px;font-size:12px;line-height:12px;letter-spacing:-0.189px;font-family:'Liberation Sans', sans-serif;font-weight:normal;color:#000;">Sequential</div>
<div class="t" style="left:50.0px;top:371.84px;font-size:12px;line-height:12px;letter-spacing:-0.218px;font-family:'Liberation Sans', sans-serif;font-weight:normal;color:#000;">4 KB random single</div>
<div class="t" style="left:50.0px;top:393.84px;font-size:12px;line-height:12px;letter-spacing:-0.138px;font-family:'Liberation Sans', sans-serif;font-weight:normal;color:#000;">4 KB random multi</div>
<div class="t" style="left:271.5px;top:346.00px;font-size:13px;line-height:13px;font-family:'Liberation Sans', sans-serif;font-weight:bold;"><span style="display:inline-block;width:7px;text-align:center;"><span style="display:inline-block;transform:scaleX(0.78);">2</span></span><span style="display:inline-block;width:7px;text-align:center;"><span style="display:inline-block;transform:scaleX(0.78);">4</span></span><span style="display:inline-block;width:7px;text-align:center;"><span style="display:inline-block;transform:scaleX(0.78);">3</span></span><span style="display:inline-block;width:7px;text-align:center;"><span style="display:inline-block;transform:scaleX(0.78);">7</span></span><span style="display:inline-block;width:7px;text-align:center;"><span style="display:inline-block;transform:scaleX(0.78);">3</span></span><span style="display:inline-block;width:7px;text-align:center;"><span style="display:inline-block;transform:scaleX(0.78);">9</span></span><span style="display:inline-block;width:7px;text-align:center;"><span style="display:inline-block;transform:scaleX(0.78);">6</span></span><span style="display:inline-block;width:7px;text-align:center;">&nbsp;</span><span style="display:inline-block;width:7px;text-align:center;"><span style="display:inline-block;font-family:'Liberation Mono', monospace;font-size:12px;transform:scale(0.95,1.12);transform-origin:50% 80%;">K</span></span><span style="display:inline-block;width:7px;text-align:center;"><span style="display:inline-block;font-family:'Liberation Mono', monospace;font-size:12px;transform:scale(0.95,1.12);transform-origin:50% 80%;">B</span></span><span style="display:inline-block;width:7px;text-align:center;"><span style="display:inline-block;font-family:'Liberation Mono', monospace;font-size:12px;transform:scale(0.95,1.12);transform-origin:50% 80%;">/</span></span><span style="display:inline-block;width:7px;text-align:center;"><span style="display:inline-block;font-family:'Liberation Mono', monospace;font-size:12px;transform:scale(0.95,1.12);transform-origin:50% 80%;">s</span></span></div>
<div class="t" style="left:372.5px;top:346.00px;font-size:13px;line-height:13px;font-family:'Liberation Sans', sans-serif;font-weight:bold;"><span style="display:inline-block;width:7px;text-align:center;"><span style="display:inline-block;transform:scaleX(0.78);">1</span></span><span style="display:inline-block;width:7px;text-align:center;"><span style="display:inline-block;transform:scaleX(0.78);">8</span></span><span style="display:inline-block;width:7px;text-align:center;"><span style="display:inline-block;transform:scaleX(0.78);">2</span></span><span style="display:inline-block;width:7px;text-align:center;"><span style="display:inline-block;transform:scaleX(0.78);">6</span></span><span style="display:inline-block;width:7px;text-align:center;"><span style="display:inline-block;transform:scaleX(0.78);">8</span></span><span style="display:inline-block;width:7px;text-align:center;"><span style="display:inline-block;transform:scaleX(0.78);">6</span></span><span style="display:inline-block;width:7px;text-align:center;"><span style="display:inline-block;transform:scaleX(0.78);">0</span></span><span style="display:inline-block;width:7px;text-align:center;">&nbsp;</span><span style="display:inline-block;width:7px;text-align:center;"><span style="display:inline-block;font-family:'Liberation Mono', monospace;font-size:12px;transform:scale(0.95,1.12);transform-origin:50% 80%;">K</span></span><span style="display:inline-block;width:7px;text-align:center;"><span style="display:inline-block;font-family:'Liberation Mono', monospace;font-size:12px;transform:scale(0.95,1.12);transform-origin:50% 80%;">B</span></span><span style="display:inline-block;width:7px;text-align:center;"><span style="display:inline-block;font-family:'Liberation Mono', monospace;font-size:12px;transform:scale(0.95,1.12);transform-origin:50% 80%;">/</span></span><span style="display:inline-block;width:7px;text-align:center;"><span style="display:inline-block;font-family:'Liberation Mono', monospace;font-size:12px;transform:scale(0.95,1.12);transform-origin:50% 80%;">s</span></span></div>
<div class="t" style="left:285.5px;top:369.00px;font-size:13px;line-height:13px;font-family:'Liberation Sans', sans-serif;font-weight:bold;"><span style="display:inline-block;width:7px;text-align:center;"><span style="display:inline-block;transform:scaleX(0.78);">1</span></span><span style="display:inline-block;width:7px;text-align:center;"><span style="display:inline-block;transform:scaleX(0.78);">0</span></span><span style="display:inline-block;width:7px;text-align:center;"><span style="display:inline-block;transform:scaleX(0.78);">0</span></span><span style="display:inline-block;width:7px;text-align:center;"><span style="display:inline-block;transform:scaleX(0.78);">7</span></span><span style="display:inline-block;width:7px;text-align:center;"><span style="display:inline-block;transform:scaleX(0.78);">1</span></span><span style="display:inline-block;width:7px;text-align:center;">&nbsp;</span><span style="display:inline-block;width:7px;text-align:center;"><span style="display:inline-block;font-family:'Liberation Mono', monospace;font-size:12px;transform:scale(0.95,1.12);transform-origin:50% 80%;">I</span></span><span style="display:inline-block;width:7px;text-align:center;"><span style="display:inline-block;font-family:'Liberation Mono', monospace;font-size:12px;transform:scale(0.95,1.12);transform-origin:50% 80%;">O</span></span><span style="display:inline-block;width:7px;text-align:center;"><span style="display:inline-block;font-family:'Liberation Mono', monospace;font-size:12px;transform:scale(0.95,1.12);transform-origin:50% 80%;">P</span></span><span style="display:inline-block;width:7px;text-align:center;"><span style="display:inline-block;font-family:'Liberation Mono', monospace;font-size:12px;transform:scale(0.95,1.12);transform-origin:50% 80%;">S</span></span></div>
<div class="t" style="left:386.5px;top:369.00px;font-size:13px;line-height:13px;font-family:'Liberation Sans', sans-serif;font-weight:bold;"><span style="display:inline-block;width:7px;text-align:center;"><span style="display:inline-block;transform:scaleX(0.78);">4</span></span><span style="display:inline-block;width:7px;text-align:center;"><span style="display:inline-block;transform:scaleX(0.78);">1</span></span><span style="display:inline-block;width:7px;text-align:center;"><span style="display:inline-block;transform:scaleX(0.78);">8</span></span><span style="display:inline-block;width:7px;text-align:center;"><span style="display:inline-block;transform:scaleX(0.78);">0</span></span><span style="display:inline-block;width:7px;text-align:center;"><span style="display:inline-block;transform:scaleX(0.78);">9</span></span><span style="display:inline-block;width:7px;text-align:center;">&nbsp;</span><span style="display:inline-block;width:7px;text-align:center;"><span style="display:inline-block;font-family:'Liberation Mono', monospace;font-size:12px;transform:scale(0.95,1.12);transform-origin:50% 80%;">I</span></span><span style="display:inline-block;width:7px;text-align:center;"><span style="display:inline-block;font-family:'Liberation Mono', monospace;font-size:12px;transform:scale(0.95,1.12);transform-origin:50% 80%;">O</span></span><span style="display:inline-block;width:7px;text-align:center;"><span style="display:inline-block;font-family:'Liberation Mono', monospace;font-size:12px;transform:scale(0.95,1.12);transform-origin:50% 80%;">P</span></span><span style="display:inline-block;width:7px;text-align:center;"><span style="display:inline-block;font-family:'Liberation Mono', monospace;font-size:12px;transform:scale(0.95,1.12);transform-origin:50% 80%;">S</span></span></div>
<div class="t" style="left:285.5px;top:391.00px;font-size:13px;line-height:13px;font-family:'Liberation Sans', sans-serif;font-weight:bold;"><span style="display:inline-block;width:7px;text-align:center;"><span style="display:inline-block;transform:scaleX(0.78);">8</span></span><span style="display:inline-block;width:7px;text-align:center;"><span style="display:inline-block;transform:scaleX(0.78);">1</span></span><span style="display:inline-block;width:7px;text-align:center;"><span style="display:inline-block;transform:scaleX(0.78);">6</span></span><span style="display:inline-block;width:7px;text-align:center;"><span style="display:inline-block;transform:scaleX(0.78);">1</span></span><span style="display:inline-block;width:7px;text-align:center;"><span style="display:inline-block;transform:scaleX(0.78);">3</span></span><span style="display:inline-block;width:7px;text-align:center;">&nbsp;</span><span style="display:inline-block;width:7px;text-align:center;"><span style="display:inline-block;font-family:'Liberation Mono', monospace;font-size:12px;transform:scale(0.95,1.12);transform-origin:50% 80%;">I</span></span><span style="display:inline-block;width:7px;text-align:center;"><span style="display:inline-block;font-family:'Liberation Mono', monospace;font-size:12px;transform:scale(0.95,1.12);transform-origin:50% 80%;">O</span></span><span style="display:inline-block;width:7px;text-align:center;"><span style="display:inline-block;font-family:'Liberation Mono', monospace;font-size:12px;transform:scale(0.95,1.12);transform-origin:50% 80%;">P</span></span><span style="display:inline-block;width:7px;text-align:center;"><span style="display:inline-block;font-family:'Liberation Mono', monospace;font-size:12px;transform:scale(0.95,1.12);transform-origin:50% 80%;">S</span></span></div>
<div class="t" style="left:386.5px;top:391.00px;font-size:13px;line-height:13px;font-family:'Liberation Sans', sans-serif;font-weight:bold;"><span style="display:inline-block;width:7px;text-align:center;"><span style="display:inline-block;transform:scaleX(0.78);">7</span></span><span style="display:inline-block;width:7px;text-align:center;"><span style="display:inline-block;transform:scaleX(0.78);">4</span></span><span style="display:inline-block;width:7px;text-align:center;"><span style="display:inline-block;transform:scaleX(0.78);">9</span></span><span style="display:inline-block;width:7px;text-align:center;"><span style="display:inline-block;transform:scaleX(0.78);">6</span></span><span style="display:inline-block;width:7px;text-align:center;"><span style="display:inline-block;transform:scaleX(0.78);">9</span></span><span style="display:inline-block;width:7px;text-align:center;">&nbsp;</span><span style="display:inline-block;width:7px;text-align:center;"><span style="display:inline-block;font-family:'Liberation Mono', monospace;font-size:12px;transform:scale(0.95,1.12);transform-origin:50% 80%;">I</span></span><span style="display:inline-block;width:7px;text-align:center;"><span style="display:inline-block;font-family:'Liberation Mono', monospace;font-size:12px;transform:scale(0.95,1.12);transform-origin:50% 80%;">O</span></span><span style="display:inline-block;width:7px;text-align:center;"><span style="display:inline-block;font-family:'Liberation Mono', monospace;font-size:12px;transform:scale(0.95,1.12);transform-origin:50% 80%;">P</span></span><span style="display:inline-block;width:7px;text-align:center;"><span style="display:inline-block;font-family:'Liberation Mono', monospace;font-size:12px;transform:scale(0.95,1.12);transform-origin:50% 80%;">S</span></span></div>
<div style="position:absolute;left:180px;top:386px;width:23px;height:23px;background:#fff;border:1px solid #7a7a7a;border-right:none;box-sizing:border-box;"></div>
<div class="t" style="left:184px;top:390.84px;font-size:12px;line-height:12px;letter-spacing:-0.2px;font-family:'Liberation Sans', sans-serif;font-weight:normal;color:#000;">32</div>
<div style="position:absolute;left:202px;top:386px;width:18px;height:23px;background:#f0f0f0;border:1px solid #c8c8c8;box-sizing:border-box;"></div>
<div style="position:absolute;left:203px;top:388px;width:15px;height:9px;background:#e5e5e5;border:1px solid #adadad;box-sizing:border-box;"></div>
<div style="position:absolute;left:203px;top:398px;width:15px;height:9px;background:#e5e5e5;border:1px solid #adadad;box-sizing:border-box;"></div>
<svg style="position:absolute;left:0;top:0" width="671" height="583" shape-rendering="crispEdges"><rect x="210" y="391" width="1" height="1" fill="#000"/><rect x="208" y="401" width="5" height="1" fill="#000"/><rect x="209" y="392" width="3" height="1" fill="#000"/><rect x="209" y="402" width="3" height="1" fill="#000"/><rect x="208" y="393" width="5" height="1" fill="#000"/><rect x="210" y="403" width="1" height="1" fill="#000"/></svg>
<div style="position:absolute;left:17px;top:418px;width:627px;height:1px;background:#a0a0a0;"></div>
<svg style="position:absolute;left:0;top:0" width="671" height="583" viewBox="0 0 671 583" shape-rendering="crispEdges">
<defs><linearGradient id="c2bg" x1="0" y1="0" x2="0" y2="1"><stop offset="0" stop-color="#000"/><stop offset="1" stop-color="#3e3e3e"/></linearGradient><linearGradient id="rbg" x1="0" y1="0" x2="0" y2="1"><stop offset="0" stop-color="#0a5878"/><stop offset="1" stop-color="#00c6ff"/></linearGradient><linearGradient id="wbg" x1="0" y1="0" x2="0" y2="1"><stop offset="0" stop-color="#7a3a00"/><stop offset="1" stop-color="#ff8800"/></linearGradient><linearGradient id="shade" x1="0" y1="0" x2="1" y2="0"><stop offset="0" stop-color="#fff" stop-opacity="0.12"/><stop offset="0.4" stop-color="#fff" stop-opacity="0"/><stop offset="1" stop-color="#000" stop-opacity="0.25"/></linearGradient></defs>
<rect x="45" y="461" width="479" height="84" fill="#000"/><rect x="46" y="460" width="478" height="1" fill="#000"/>
<rect x="47" y="462" width="476" height="81" fill="url(#c2bg)"/>
<line x1="62.5" y1="462" x2="62.5" y2="543" stroke="#636363"/>
<line x1="62.5" y1="545" x2="62.5" y2="549" stroke="#636363"/>
<line x1="94.5" y1="462" x2="94.5" y2="543" stroke="#636363"/>
<line x1="94.5" y1="545" x2="94.5" y2="549" stroke="#636363"/>
<line x1="125.5" y1="462" x2="125.5" y2="543" stroke="#636363"/>
<line x1="125.5" y1="545" x2="125.5" y2="549" stroke="#636363"/>
<line x1="157.5" y1="462" x2="157.5" y2="543" stroke="#636363"/>
<line x1="157.5" y1="545" x2="157.5" y2="549" stroke="#636363"/>
<line x1="188.5" y1="462" x2="188.5" y2="543" stroke="#636363"/>
<line x1="188.5" y1="545" x2="188.5" y2="549" stroke="#636363"/>
<line x1="220.5" y1="462" x2="220.5" y2="543" stroke="#636363"/>
<line x1="220.5" y1="545" x2="220.5" y2="549" stroke="#636363"/>
<line x1="252.5" y1="462" x2="252.5" y2="543" stroke="#636363"/>
<line x1="252.5" y1="545" x2="252.5" y2="549" stroke="#636363"/>
<line x1="283.5" y1="462" x2="283.5" y2="543" stroke="#636363"/>
<line x1="283.5" y1="545" x2="283.5" y2="549" stroke="#636363"/>
<line x1="315.5" y1="462" x2="315.5" y2="543" stroke="#636363"/>
<line x1="315.5" y1="545" x2="315.5" y2="549" stroke="#636363"/>
<line x1="347.5" y1="462" x2="347.5" y2="543" stroke="#636363"/>
<line x1="347.5" y1="545" x2="347.5" y2="549" stroke="#636363"/>
<line x1="378.5" y1="462" x2="378.5" y2="543" stroke="#636363"/>
<line x1="378.5" y1="545" x2="378.5" y2="549" stroke="#636363"/>
<line x1="410.5" y1="462" x2="410.5" y2="543" stroke="#636363"/>
<line x1="410.5" y1="545" x2="410.5" y2="549" stroke="#636363"/>
<line x1="442.5" y1="462" x2="442.5" y2="543" stroke="#636363"/>
<line x1="442.5" y1="545" x2="442.5" y2="549" stroke="#636363"/>
<line x1="473.5" y1="462" x2="473.5" y2="543" stroke="#636363"/>
<line x1="473.5" y1="545" x2="473.5" y2="549" stroke="#636363"/>
<line x1="505.5" y1="462" x2="505.5" y2="543" stroke="#636363"/>
<line x1="505.5" y1="545" x2="505.5" y2="549" stroke="#636363"/>
<line x1="45" y1="462.5" x2="525" y2="462.5" stroke="#666666"/>
<line x1="46" y1="469.5" x2="523" y2="469.5" stroke="#565656"/>
<line x1="45" y1="476.5" x2="525" y2="476.5" stroke="#666666"/>
<line x1="46" y1="482.5" x2="523" y2="482.5" stroke="#535353"/>
<line x1="45" y1="489.5" x2="525" y2="489.5" stroke="#666666"/>
<line x1="46" y1="496.5" x2="523" y2="496.5" stroke="#505050"/>
<line x1="45" y1="503.5" x2="525" y2="503.5" stroke="#666666"/>
<line x1="46" y1="509.5" x2="523" y2="509.5" stroke="#4d4d4d"/>
<line x1="45" y1="516.5" x2="525" y2="516.5" stroke="#666666"/>
<line x1="46" y1="523.5" x2="523" y2="523.5" stroke="#4a4a4a"/>
<line x1="45" y1="530.5" x2="525" y2="530.5" stroke="#666666"/>
<line x1="46" y1="536.5" x2="523" y2="536.5" stroke="#474747"/>
<rect x="53" y="542" width="9" height="1" fill="url(#rbg)"/>
<rect x="62" y="542" width="9" height="1" fill="url(#wbg)"/>
<rect x="85" y="542" width="9" height="1" fill="url(#rbg)"/>
<rect x="94" y="542" width="9" height="1" fill="url(#wbg)"/>
<rect x="116" y="541" width="9" height="2" fill="url(#rbg)"/>
<rect x="125" y="542" width="9" height="1" fill="url(#wbg)"/>
<rect x="148" y="539" width="9" height="4" fill="url(#rbg)"/>
<rect x="148" y="539" width="9" height="1" fill="#22d0ff"/>
<rect x="148" y="539" width="1" height="4" fill="#22d0ff" fill-opacity="0.75"/>
<rect x="156" y="539" width="1" height="4" fill="#22d0ff" fill-opacity="0.55"/>
<rect x="157" y="538" width="9" height="5" fill="url(#wbg)"/>
<rect x="157" y="538" width="9" height="1" fill="#ff9a20"/>
<rect x="157" y="538" width="1" height="5" fill="#ff9a20" fill-opacity="0.75"/>
<rect x="165" y="538" width="1" height="5" fill="#ff9a20" fill-opacity="0.55"/>
<rect x="179" y="536" width="9" height="7" fill="url(#rbg)"/>
<rect x="179" y="536" width="9" height="1" fill="#22d0ff"/>
<rect x="179" y="536" width="1" height="7" fill="#22d0ff" fill-opacity="0.75"/>
<rect x="187" y="536" width="1" height="7" fill="#22d0ff" fill-opacity="0.55"/>
<rect x="188" y="534" width="9" height="9" fill="url(#wbg)"/>
<rect x="188" y="534" width="9" height="1" fill="#ff9a20"/>
<rect x="188" y="534" width="1" height="9" fill="#ff9a20" fill-opacity="0.75"/>
<rect x="196" y="534" width="1" height="9" fill="#ff9a20" fill-opacity="0.55"/>
<rect x="211" y="530" width="9" height="13" fill="url(#rbg)"/>
<rect x="211" y="530" width="9" height="1" fill="#22d0ff"/>
<rect x="211" y="530" width="1" height="13" fill="#22d0ff" fill-opacity="0.75"/>
<rect x="219" y="530" width="1" height="13" fill="#22d0ff" fill-opacity="0.55"/>
<rect x="220" y="527" width="9" height="16" fill="url(#wbg)"/>
<rect x="220" y="527" width="9" height="1" fill="#ff9a20"/>
<rect x="220" y="527" width="1" height="16" fill="#ff9a20" fill-opacity="0.75"/>
<rect x="228" y="527" width="1" height="16" fill="#ff9a20" fill-opacity="0.55"/>
<rect x="243" y="522" width="9" height="21" fill="url(#rbg)"/>
<rect x="243" y="522" width="9" height="1" fill="#22d0ff"/>
<rect x="243" y="522" width="1" height="21" fill="#22d0ff" fill-opacity="0.75"/>
<rect x="251" y="522" width="1" height="21" fill="#22d0ff" fill-opacity="0.55"/>
<rect x="252" y="517" width="9" height="26" fill="url(#wbg)"/>
<rect x="252" y="517" width="9" height="1" fill="#ff9a20"/>
<rect x="252" y="517" width="1" height="26" fill="#ff9a20" fill-opacity="0.75"/>
<rect x="260" y="517" width="1" height="26" fill="#ff9a20" fill-opacity="0.55"/>
<rect x="274" y="511" width="9" height="32" fill="url(#rbg)"/>
<rect x="274" y="511" width="9" height="1" fill="#22d0ff"/>
<rect x="274" y="511" width="1" height="32" fill="#22d0ff" fill-opacity="0.75"/>
<rect x="282" y="511" width="1" height="32" fill="#22d0ff" fill-opacity="0.55"/>
<rect x="283" y="506" width="9" height="37" fill="url(#wbg)"/>
<rect x="283" y="506" width="9" height="1" fill="#ff9a20"/>
<rect x="283" y="506" width="1" height="37" fill="#ff9a20" fill-opacity="0.75"/>
<rect x="291" y="506" width="1" height="37" fill="#ff9a20" fill-opacity="0.55"/>
<rect x="306" y="501" width="9" height="42" fill="url(#rbg)"/>
<rect x="306" y="501" width="9" height="1" fill="#22d0ff"/>
<rect x="306" y="501" width="1" height="42" fill="#22d0ff" fill-opacity="0.75"/>
<rect x="314" y="501" width="1" height="42" fill="#22d0ff" fill-opacity="0.55"/>
<rect x="315" y="494" width="9" height="49" fill="url(#wbg)"/>
<rect x="315" y="494" width="9" height="1" fill="#ff9a20"/>
<rect x="315" y="494" width="1" height="49" fill="#ff9a20" fill-opacity="0.75"/>
<rect x="323" y="494" width="1" height="49" fill="#ff9a20" fill-opacity="0.55"/>
<rect x="338" y="491" width="9" height="52" fill="url(#rbg)"/>
<rect x="338" y="491" width="9" height="1" fill="#22d0ff"/>
<rect x="338" y="491" width="1" height="52" fill="#22d0ff" fill-opacity="0.75"/>
<rect x="346" y="491" width="1" height="52" fill="#22d0ff" fill-opacity="0.55"/>
<rect x="347" y="486" width="9" height="57" fill="url(#wbg)"/>
<rect x="347" y="486" width="9" height="1" fill="#ff9a20"/>
<rect x="347" y="486" width="1" height="57" fill="#ff9a20" fill-opacity="0.75"/>
<rect x="355" y="486" width="1" height="57" fill="#ff9a20" fill-opacity="0.55"/>
<rect x="369" y="495" width="9" height="48" fill="url(#rbg)"/>
<rect x="369" y="495" width="9" height="1" fill="#22d0ff"/>
<rect x="369" y="495" width="1" height="48" fill="#22d0ff" fill-opacity="0.75"/>
<rect x="377" y="495" width="1" height="48" fill="#22d0ff" fill-opacity="0.55"/>
<rect x="378" y="488" width="9" height="55" fill="url(#wbg)"/>
<rect x="378" y="488" width="9" height="1" fill="#ff9a20"/>
<rect x="378" y="488" width="1" height="55" fill="#ff9a20" fill-opacity="0.75"/>
<rect x="386" y="488" width="1" height="55" fill="#ff9a20" fill-opacity="0.55"/>
<rect x="401" y="491" width="9" height="52" fill="url(#rbg)"/>
<rect x="401" y="491" width="9" height="1" fill="#22d0ff"/>
<rect x="401" y="491" width="1" height="52" fill="#22d0ff" fill-opacity="0.75"/>
<rect x="409" y="491" width="1" height="52" fill="#22d0ff" fill-opacity="0.55"/>
<rect x="410" y="484" width="9" height="59" fill="url(#wbg)"/>
<rect x="410" y="484" width="9" height="1" fill="#ff9a20"/>
<rect x="410" y="484" width="1" height="59" fill="#ff9a20" fill-opacity="0.75"/>
<rect x="418" y="484" width="1" height="59" fill="#ff9a20" fill-opacity="0.55"/>
<rect x="433" y="482" width="9" height="61" fill="url(#rbg)"/>
<rect x="433" y="482" width="9" height="1" fill="#22d0ff"/>
<rect x="433" y="482" width="1" height="61" fill="#22d0ff" fill-opacity="0.75"/>
<rect x="441" y="482" width="1" height="61" fill="#22d0ff" fill-opacity="0.55"/>
<rect x="442" y="481" width="9" height="62" fill="url(#wbg)"/>
<rect x="442" y="481" width="9" height="1" fill="#ff9a20"/>
<rect x="442" y="481" width="1" height="62" fill="#ff9a20" fill-opacity="0.75"/>
<rect x="450" y="481" width="1" height="62" fill="#ff9a20" fill-opacity="0.55"/>
<rect x="464" y="482" width="9" height="61" fill="url(#rbg)"/>
<rect x="464" y="482" width="9" height="1" fill="#22d0ff"/>
<rect x="464" y="482" width="1" height="61" fill="#22d0ff" fill-opacity="0.75"/>
<rect x="472" y="482" width="1" height="61" fill="#22d0ff" fill-opacity="0.55"/>
<rect x="473" y="478" width="9" height="65" fill="url(#wbg)"/>
<rect x="473" y="478" width="9" height="1" fill="#ff9a20"/>
<rect x="473" y="478" width="1" height="65" fill="#ff9a20" fill-opacity="0.75"/>
<rect x="481" y="478" width="1" height="65" fill="#ff9a20" fill-opacity="0.55"/>
<rect x="496" y="475" width="9" height="68" fill="url(#rbg)"/>
<rect x="496" y="475" width="9" height="1" fill="#22d0ff"/>
<rect x="496" y="475" width="1" height="68" fill="#22d0ff" fill-opacity="0.75"/>
<rect x="504" y="475" width="1" height="68" fill="#22d0ff" fill-opacity="0.55"/>
<rect x="505" y="478" width="9" height="65" fill="url(#wbg)"/>
<rect x="505" y="478" width="9" height="1" fill="#ff9a20"/>
<rect x="505" y="478" width="1" height="65" fill="#ff9a20" fill-opacity="0.75"/>
<rect x="513" y="478" width="1" height="65" fill="#ff9a20" fill-opacity="0.55"/>
<rect x="417" y="449" width="9" height="9" fill="url(#rbg)"/><rect x="417" y="449" width="9" height="1" fill="#2ccaff"/>
<rect x="477" y="449" width="9" height="9" fill="url(#wbg)"/><rect x="477" y="449" width="9" height="1" fill="#ff9c30"/>
</svg>
<div class="t" style="right:629.5px;top:456.69px;font-size:11px;line-height:11px;letter-spacing:-0.2px;font-family:'Liberation Sans', sans-serif;font-weight:normal;color:#000;">3000</div>
<div class="t" style="right:629.5px;top:470.21px;font-size:11px;line-height:11px;letter-spacing:-0.2px;font-family:'Liberation Sans', sans-serif;font-weight:normal;color:#000;">2500</div>
<div class="t" style="right:629.5px;top:483.73px;font-size:11px;line-height:11px;letter-spacing:-0.2px;font-family:'Liberation Sans', sans-serif;font-weight:normal;color:#000;">2000</div>
<div class="t" style="right:629.5px;top:497.25px;font-size:11px;line-height:11px;letter-spacing:-0.2px;font-family:'Liberation Sans', sans-serif;font-weight:normal;color:#000;">1500</div>
<div class="t" style="right:629.5px;top:510.77px;font-size:11px;line-height:11px;letter-spacing:-0.2px;font-family:'Liberation Sans', sans-serif;font-weight:normal;color:#000;">1000</div>
<div class="t" style="right:629.5px;top:524.29px;font-size:11px;line-height:11px;letter-spacing:-0.2px;font-family:'Liberation Sans', sans-serif;font-weight:normal;color:#000;">500</div>
<div class="t" style="left:-38.0px;width:200px;text-align:center;top:549.69px;font-size:11px;line-height:11px;letter-spacing:-0.2px;font-family:'Liberation Sans', sans-serif;font-weight:normal;color:#000;">0.5</div>
<div class="t" style="left:-6.375px;width:200px;text-align:center;top:549.69px;font-size:11px;line-height:11px;letter-spacing:-0.2px;font-family:'Liberation Sans', sans-serif;font-weight:normal;color:#000;">1</div>
<div class="t" style="left:25.25px;width:200px;text-align:center;top:549.69px;font-size:11px;line-height:11px;letter-spacing:-0.2px;font-family:'Liberation Sans', sans-serif;font-weight:normal;color:#000;">2</div>
<div class="t" style="left:56.875px;width:200px;text-align:center;top:549.69px;font-size:11px;line-height:11px;letter-spacing:-0.2px;font-family:'Liberation Sans', sans-serif;font-weight:normal;color:#000;">4</div>
<div class="t" style="left:88.5px;width:200px;text-align:center;top:549.69px;font-size:11px;line-height:11px;letter-spacing:-0.2px;font-family:'Liberation Sans', sans-serif;font-weight:normal;color:#000;">8</div>
<div class="t" style="left:120.125px;width:200px;text-align:center;top:549.69px;font-size:11px;line-height:11px;letter-spacing:-0.2px;font-family:'Liberation Sans', sans-serif;font-weight:normal;color:#000;">16</div>
<div class="t" style="left:151.75px;width:200px;text-align:center;top:549.69px;font-size:11px;line-height:11px;letter-spacing:-0.2px;font-family:'Liberation Sans', sans-serif;font-weight:normal;color:#000;">32</div>
<div class="t" style="left:183.375px;width:200px;text-align:center;top:549.69px;font-size:11px;line-height:11px;letter-spacing:-0.2px;font-family:'Liberation Sans', sans-serif;font-weight:normal;color:#000;">64</div>
<div class="t" style="left:215.0px;width:200px;text-align:center;top:549.69px;font-size:11px;line-height:11px;letter-spacing:-0.2px;font-family:'Liberation Sans', sans-serif;font-weight:normal;color:#000;">128</div>
<div class="t" style="left:246.625px;width:200px;text-align:center;top:549.69px;font-size:11px;line-height:11px;letter-spacing:-0.2px;font-family:'Liberation Sans', sans-serif;font-weight:normal;color:#000;">256</div>
<div class="t" style="left:278.25px;width:200px;text-align:center;top:549.69px;font-size:11px;line-height:11px;letter-spacing:-0.2px;font-family:'Liberation Sans', sans-serif;font-weight:normal;color:#000;">512</div>
<div class="t" style="left:309.875px;width:200px;text-align:center;top:549.69px;font-size:11px;line-height:11px;letter-spacing:-0.2px;font-family:'Liberation Sans', sans-serif;font-weight:normal;color:#000;">1024</div>
<div class="t" style="left:341.5px;width:200px;text-align:center;top:549.69px;font-size:11px;line-height:11px;letter-spacing:-0.2px;font-family:'Liberation Sans', sans-serif;font-weight:normal;color:#000;">2048</div>
<div class="t" style="left:373.125px;width:200px;text-align:center;top:549.69px;font-size:11px;line-height:11px;letter-spacing:-0.2px;font-family:'Liberation Sans', sans-serif;font-weight:normal;color:#000;">4096</div>
<div class="t" style="left:404.75px;width:200px;text-align:center;top:549.69px;font-size:11px;line-height:11px;letter-spacing:-0.2px;font-family:'Liberation Sans', sans-serif;font-weight:normal;color:#000;">8192</div>
<div class="t" style="left:47.5px;top:448.19px;font-size:11px;line-height:11px;letter-spacing:-0.3px;font-family:'Liberation Sans', sans-serif;font-weight:normal;color:#000;">MB/s</div>
<div class="t" style="left:432.09999999999997px;top:446.84px;font-size:12px;line-height:12px;letter-spacing:-0.6px;font-family:'Liberation Sans', sans-serif;font-weight:normal;color:#000;transform:scaleX(0.991);transform-origin:0 0;">read</div>
<div class="t" style="left:492.40000000000003px;top:446.84px;font-size:12px;line-height:12px;letter-spacing:-0.1px;font-family:'Liberation Sans', sans-serif;font-weight:normal;color:#000;">write</div>
<div style="position:absolute;left:561px;top:151px;width:86px;height:24px;background:#e1e1e1;border:2px solid #0078d7;box-sizing:border-box;"></div>
<div style="position:absolute;left:563px;top:153px;width:82px;height:20px;border:1px dotted #000;box-sizing:border-box;"></div>
<div class="t" style="left:504px;width:200px;text-align:center;top:156.84px;font-size:12px;line-height:12px;letter-spacing:-0.2px;font-family:'Liberation Sans', sans-serif;font-weight:normal;color:#000;">Start</div>
<div class="t" style="left:561px;top:185.84px;font-size:12px;line-height:12px;letter-spacing:-0.27px;font-family:'Liberation Sans', sans-serif;font-weight:normal;color:#000;">Drive</div>
<div style="position:absolute;left:560px;top:205px;width:88px;height:23px;background:#e5e5e5;border:1px solid #adadad;box-sizing:border-box;"></div>
<div class="t" style="left:564px;top:210.84px;font-size:12px;line-height:12px;letter-spacing:-0.27px;font-family:'Liberation Sans', sans-serif;font-weight:normal;color:#000;">X:</div>
<svg style="position:absolute;left:634px;top:213px" width="10" height="8"><path d="M1 1.5L5 5.5L9 1.5" fill="none" stroke="#444" stroke-width="1.3"/></svg>
<div class="t" style="left:561px;top:237.84px;font-size:12px;line-height:12px;letter-spacing:-0.27px;font-family:'Liberation Sans', sans-serif;font-weight:normal;color:#000;">File length</div>
<div style="position:absolute;left:560px;top:265px;width:48px;height:23px;background:#fff;border:1px solid #7a7a7a;border-right:none;box-sizing:border-box;"></div>
<div class="t" style="left:563px;top:269.84px;font-size:12px;line-height:12px;letter-spacing:-0.35px;font-family:'Liberation Sans', sans-serif;font-weight:normal;color:#000;">32000</div>
<div style="position:absolute;left:607px;top:265px;width:18px;height:23px;background:#f0f0f0;border:1px solid #c8c8c8;box-sizing:border-box;"></div>
<div style="position:absolute;left:608px;top:267px;width:15px;height:9px;background:#e5e5e5;border:1px solid #adadad;box-sizing:border-box;"></div>
<div style="position:absolute;left:608px;top:277px;width:15px;height:9px;background:#e5e5e5;border:1px solid #adadad;box-sizing:border-box;"></div>
<svg style="position:absolute;left:0;top:0" width="671" height="583" shape-rendering="crispEdges"><rect x="615" y="270" width="1" height="1" fill="#000"/><rect x="613" y="280" width="5" height="1" fill="#000"/><rect x="614" y="271" width="3" height="1" fill="#000"/><rect x="614" y="281" width="3" height="1" fill="#000"/><rect x="613" y="272" width="5" height="1" fill="#000"/><rect x="615" y="282" width="1" height="1" fill="#000"/></svg>
<div class="t" style="left:625.5px;top:273.84px;font-size:12px;line-height:12px;letter-spacing:-0.27px;font-family:'Liberation Sans', sans-serif;font-weight:normal;color:#000;">MB</div>
<div class="t" style="left:561px;top:309.84px;font-size:12px;line-height:12px;letter-spacing:-0.27px;font-family:'Liberation Sans', sans-serif;font-weight:normal;color:#000;">Data pattern</div>
<div style="position:absolute;left:560px;top:330px;width:88px;height:23px;background:#e5e5e5;border:1px solid #adadad;box-sizing:border-box;"></div>
<div class="t" style="left:564px;top:335.84px;font-size:12px;line-height:12px;letter-spacing:-0.27px;font-family:'Liberation Sans', sans-serif;font-weight:normal;color:#000;">Random</div>
<svg style="position:absolute;left:634px;top:338px" width="10" height="8"><path d="M1 1.5L5 5.5L9 1.5" fill="none" stroke="#444" stroke-width="1.3"/></svg>
<div style="position:absolute;left:530px;top:418px;width:114px;height:1px;background:#a0a0a0;"></div>
<div class="t" style="left:561px;top:436.84px;font-size:12px;line-height:12px;letter-spacing:-0.27px;font-family:'Liberation Sans', sans-serif;font-weight:normal;color:#000;">File length</div>
<div style="position:absolute;left:560px;top:460px;width:88px;height:23px;background:#e5e5e5;border:1px solid #adadad;box-sizing:border-box;"></div>
<div class="t" style="left:564px;top:465.84px;font-size:12px;line-height:12px;letter-spacing:-0.27px;font-family:'Liberation Sans', sans-serif;font-weight:normal;color:#000;">64 MB</div>
<svg style="position:absolute;left:634px;top:468px" width="10" height="8"><path d="M1 1.5L5 5.5L9 1.5" fill="none" stroke="#444" stroke-width="1.3"/></svg>
<div class="t" style="left:561px;top:499.34px;font-size:12px;line-height:12px;letter-spacing:-0.27px;font-family:'Liberation Sans', sans-serif;font-weight:normal;color:#000;">Delay</div>
<div style="position:absolute;left:561px;top:520px;width:63px;height:23px;background:#fff;border:1px solid #7a7a7a;box-sizing:border-box;"></div>
<div class="t" style="left:564.5px;top:524.84px;font-size:12px;line-height:12px;letter-spacing:-0.27px;font-family:'Liberation Sans', sans-serif;font-weight:normal;color:#000;">0</div>
<div style="position:absolute;left:629px;top:519px;width:15px;height:24px;background:#e5e5e5;border:1px solid #adadad;box-sizing:border-box;"></div>
<div style="position:absolute;left:630px;top:530px;width:13px;height:2px;background:#b4b4b4;"></div>
<svg style="position:absolute;left:0;top:0" width="671" height="583" shape-rendering="crispEdges"><rect x="636" y="523" width="1" height="1" fill="#000"/><rect x="634" y="534" width="5" height="1" fill="#000"/><rect x="635" y="524" width="3" height="1" fill="#000"/><rect x="635" y="535" width="3" height="1" fill="#000"/><rect x="634" y="525" width="5" height="1" fill="#000"/><rect x="636" y="536" width="1" height="1" fill="#000"/></svg>
</body></html>
